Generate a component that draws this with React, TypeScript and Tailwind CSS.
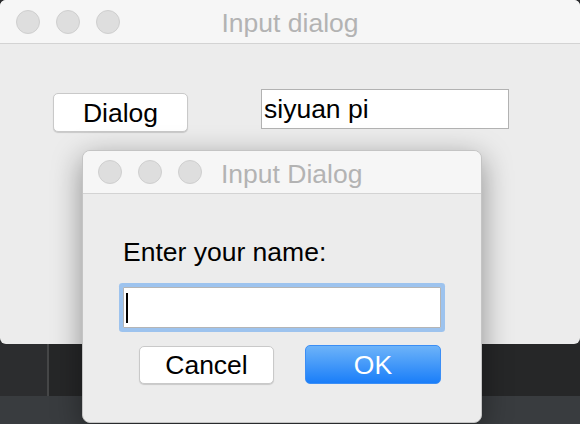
import React from "react";

const font = { fontFamily: '"Liberation Sans", Arial, sans-serif' };

function Lights() {
  return (
    <div className="flex items-center gap-4">
      <div className="w-6 h-6 rounded-full bg-[#dedede] border border-[#cfcfcf]" />
      <div className="w-6 h-6 rounded-full bg-[#dedede] border border-[#cfcfcf]" />
      <div className="w-6 h-6 rounded-full bg-[#dedede] border border-[#cfcfcf]" />
    </div>
  );
}

export default function App() {
  return (
    <div
      className="relative w-[580px] h-[424px] overflow-hidden bg-[#2a2b2d] flex flex-col"
      style={font}
    >
      {/* Main window */}
      <div className="h-[344px] shrink-0 rounded-[6px] bg-[#ececec] flex flex-col overflow-hidden">
        <div className="relative h-[44px] shrink-0 bg-[#f6f6f6] border-b border-[#d3d3d3] flex items-center pl-4">
          <Lights />
          <div className="absolute inset-x-0 top-[10px] text-center text-[26.5px] leading-[26px] text-[#b3b3b3]">
            Input dialog
          </div>
        </div>
        <div className="flex items-start pl-[53px] pt-[45px]">
          <div className="mt-[4px] w-[135px] h-[39px] rounded-[5px] bg-white border border-[#c9c9c9] shadow-[0_1px_1px_rgba(0,0,0,0.15)] flex items-center justify-center text-[26.5px] leading-[26px] text-black">
            Dialog
          </div>
          <div className="ml-[73px] w-[248px] h-[40px] bg-white border border-[#b2b2b2] flex items-center pl-[2px] text-[26.5px] leading-[26px] text-black">
            siyuan pi
          </div>
        </div>
      </div>

      {/* Background below */}
      <div className="flex h-[52px] shrink-0">
        <div className="w-[47px] bg-[#2c2d2f]" />
        <div className="w-[2px] bg-[#454647]" />
        <div className="flex-1 bg-[#262728]" />
      </div>
      <div className="flex-1 bg-[#393c3f]" />

      {/* Input Dialog window */}
      <div className="absolute left-[82px] top-[150px] w-[400px] h-[273px] rounded-[8px] bg-[#ececec] border border-[#c4c4c4] shadow-[0_8px_30px_rgba(0,0,0,0.4)] flex flex-col overflow-hidden">
        <div className="h-[43px] shrink-0 bg-[#f6f6f6] border-b border-[#d3d3d3] flex items-center pl-[15px]">
          <Lights />
          <div className="ml-[19px] mt-[3px] text-[26.5px] leading-[26px] text-[#b3b3b3]">
            Input Dialog
          </div>
        </div>
        <div className="flex flex-col px-[40px]">
          <div className="mt-[45px] text-[26.5px] leading-[26px] text-black">
            Enter your name:
          </div>
          <div className="mt-[22px] h-[41px] bg-white border border-[#b5b5b5] rounded-[1px] shadow-[0_0_0_4px_#9dc3ee] flex items-center pl-[2px]">
            <div className="w-[2px] h-[30px] bg-black" />
          </div>
          <div className="mt-[18px] flex items-center">
            <div className="ml-[16px] w-[135px] h-[38px] rounded-[5px] bg-white border border-[#c9c9c9] shadow-[0_1px_1px_rgba(0,0,0,0.15)] flex items-center justify-center text-[26.5px] leading-[26px] text-black">
              Cancel
            </div>
            <div className="ml-[31px] -mt-[1px] w-[136px] h-[39px] rounded-[5px] bg-[linear-gradient(to_bottom,#6db3f9,#1a7ef9)] border border-[#3b8ef5] flex items-center justify-center text-[26.5px] leading-[26px] text-white">
              OK
            </div>
          </div>
        </div>
      </div>
    </div>
  );
}
